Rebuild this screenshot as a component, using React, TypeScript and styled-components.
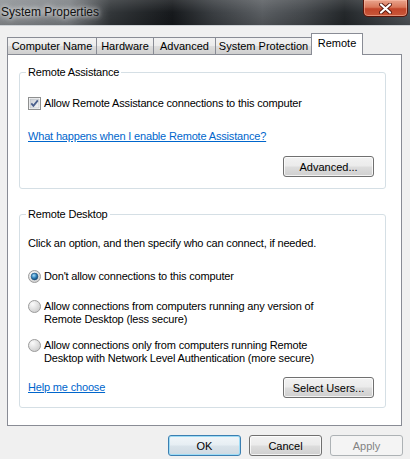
import React from 'react';
import styled, { createGlobalStyle, css } from 'styled-components';

const GlobalStyle = createGlobalStyle`
  html, body {
    margin: 0;
    padding: 0;
    background: #f0f0f0;
  }
  body {
    font-family: "Liberation Sans", Arial, sans-serif;
    font-size: 11px;
    letter-spacing: -0.17px;
    color: #000;
  }
`;

const Window = styled.div`
    width: 410px;
    height: 459px;
    display: flex;
    flex-direction: column;
    background: #f0f0f0;
    overflow: hidden;
`;

const TitleBar = styled.div`
    flex: none;
    height: 25px;
    display: flex;
    align-items: flex-start;
    justify-content: space-between;
    border-bottom: 1px solid #cfd3d7;
    background:
        linear-gradient(180deg, rgba(255, 255, 255, 0.12) 0%, rgba(0, 0, 0, 0) 50%, rgba(0, 0, 0, 0.15) 100%),
        linear-gradient(90deg, #8d9195 0%, #7c8084 17%, #33373a 27%, #16191c 42%, #3a3e42 52%, #5a5e62 64%, #44484c 74%, #24282b 84%, #50555a 100%);
`;

const Title = styled.span`
    font-size: 12px;
    letter-spacing: 0;
    line-height: 24px;
    padding-left: 1px;
    color: #101010;
    text-shadow: 0 0 5px #fff, 0 0 8px rgba(255, 255, 255, 0.8);
`;

const CloseButton = styled.div`
    width: 45px;
    height: 17px;
    margin-right: 2px;
    box-sizing: border-box;
    display: flex;
    align-items: center;
    justify-content: center;
    border: 1px solid #5a1409;
    border-top: none;
    border-radius: 0 0 5px 5px;
    background: linear-gradient(180deg, #e9a48d 0%, #d9775a 45%, #c2452a 55%, #c9583a 100%);
    box-shadow: inset 0 0 0 1px rgba(255, 200, 180, 0.5);
`;

const Body = styled.div`
    flex: 1;
    display: flex;
    flex-direction: column;
`;

const TabStrip = styled.div`
    display: flex;
    align-items: flex-end;
    height: 21px;
    margin: 7px 0 0 8px;
    position: relative;
    z-index: 1;
`;

const Tab = styled.div<{ $w: number; $active?: boolean }>`
    width: ${p => p.$w}px;
    height: 17px;
    box-sizing: border-box;
    margin-left: -1px;
    border: 1px solid #898c95;
    border-bottom: none;
    text-align: center;
    line-height: 16px;
    letter-spacing: 0;
    white-space: nowrap;
    background: linear-gradient(180deg, #f2f2f2 0%, #ebebeb 50%, #dddddd 51%, #cfcfcf 100%);
    ${p =>
        p.$active &&
        css`
            height: 22px;
            margin-bottom: -1px;
            line-height: 19px;
            background: #fff;
            position: relative;
        `}
`;

const Panel = styled.div`
    height: 372px;
    box-sizing: border-box;
    margin: 0 8px 0 7px;
    padding: 10px 15px 0 11px;
    border: 1px solid #898c95;
    background: #fff;
`;

const Group = styled.fieldset<{ $gap?: number }>`
    margin: ${p => p.$gap ?? 0}px 0 0;
    padding: 0 11px 0 8px;
    border: 1px solid #d5dfe5;
    border-radius: 3px;
    min-width: 0;
`;

const Legend = styled.legend`
    margin-left: -2px;
    padding: 0 2px;
    line-height: 14px;
`;

const GroupBody = styled.div<{ $pb: number }>`
    display: flex;
    flex-direction: column;
    padding-bottom: ${p => p.$pb}px;
`;

const Row = styled.div<{ $mt: number }>`
    display: flex;
    align-items: flex-start;
    gap: 3px;
    margin-top: ${p => p.$mt}px;
    line-height: 13px;
`;

const SplitRow = styled.div<{ $mt: number }>`
    display: flex;
    align-items: center;
    justify-content: space-between;
    margin-top: ${p => p.$mt}px;
`;

const Link = styled.a`
    color: #0066cc;
    text-decoration: underline;
    line-height: 13px;
    cursor: pointer;
`;

const ButtonRow = styled.div`
    display: flex;
    justify-content: flex-end;
    gap: 8px;
    margin: 9px 7px 0 0;
`;

const Button = styled.button<{ $w?: number; $mt?: number; $primary?: boolean }>`
    width: ${p => p.$w ?? 73}px;
    height: 21px;
    box-sizing: border-box;
    margin-top: ${p => p.$mt ?? 0}px;
    padding: 0;
    font: inherit;
    color: #000;
    border: 1px solid #707070;
    border-radius: 3px;
    background: linear-gradient(180deg, #f2f2f2 0%, #ebebeb 48%, #dddddd 52%, #cfcfcf 100%);
    box-shadow: inset 0 0 0 1px rgba(255, 255, 255, 0.75);
    align-self: flex-end;
    ${p =>
        p.$primary &&
        css`
            border-color: #3c7fb1;
            box-shadow: inset 0 0 0 1px #9edcf6;
            background: linear-gradient(180deg, #f1f6f9 0%, #e6eef3 48%, #d9e3ea 52%, #cfdae2 100%);
        `}
    &:disabled {
        border-color: #adb2b5;
        background: #f4f4f4;
        box-shadow: none;
        color: #838383;
    }
`;

const Box = styled.span`
    flex: none;
    width: 13px;
    height: 13px;
    display: block;
`;

const CheckBox = () => (
    <Box>
        <svg width="13" height="13" viewBox="0 0 13 13">
            <defs>
                <linearGradient id="cbFill" x1="0" y1="0" x2="1" y2="1">
                    <stop offset="0" stopColor="#cbcfd5" />
                    <stop offset="1" stopColor="#f7f7f7" />
                </linearGradient>
            </defs>
            <rect x="0.5" y="0.5" width="12" height="12" fill="#fff" stroke="#8e8f8f" />
            <rect x="2" y="2" width="9" height="9" fill="url(#cbFill)" stroke="#b3b7bd" strokeWidth="0.6" />
            <path d="M3.3 6.4 L5.4 8.8 L9.8 3.4" fill="none" stroke="#4a5f8c" strokeWidth="1.8" />
        </svg>
    </Box>
);

const Radio = ({ checked }: { checked?: boolean }) => (
    <Box>
        <svg width="13" height="13" viewBox="0 0 13 13">
            <defs>
                <radialGradient id="rbOff" cx="0.35" cy="0.3" r="0.8">
                    <stop offset="0" stopColor="#fbfbfb" />
                    <stop offset="1" stopColor="#c9c9c9" />
                </radialGradient>
                <radialGradient id="rbDot" cx="0.4" cy="0.35" r="0.7">
                    <stop offset="0" stopColor="#a8dcf7" />
                    <stop offset="0.55" stopColor="#2d7fb8" />
                    <stop offset="1" stopColor="#0f3f6a" />
                </radialGradient>
            </defs>
            <circle cx="6.5" cy="6.5" r="6" fill="url(#rbOff)" stroke="#9c9c9c" />
            {checked && <circle cx="6.5" cy="6.5" r="3.4" fill="url(#rbDot)" stroke="#1b4e78" strokeWidth="0.6" />}
        </svg>
    </Box>
);

const App: React.FC = () => {
    return (
        <>
            <GlobalStyle />
            <Window>
                <TitleBar>
                    <Title>System Properties</Title>
                    <CloseButton>
                        <svg width="13" height="11" viewBox="0 0 13 11">
                            <path d="M2 1.5 L11 9.5 M11 1.5 L2 9.5" stroke="#5a1a10" strokeWidth="4" strokeLinecap="round" />
                            <path d="M2 1.5 L11 9.5 M11 1.5 L2 9.5" stroke="#fff" strokeWidth="2.2" strokeLinecap="round" />
                        </svg>
                    </CloseButton>
                </TitleBar>
                <Body>
                    <TabStrip>
                        <Tab $w={90}>Computer Name</Tab>
                        <Tab $w={58}>Hardware</Tab>
                        <Tab $w={63}>Advanced</Tab>
                        <Tab $w={97}>System Protection</Tab>
                        <Tab $w={52} $active>Remote</Tab>
                    </TabStrip>
                    <Panel>
                        <Group>
                            <Legend>Remote Assistance</Legend>
                            <GroupBody $pb={11}>
                                <Row $mt={18}>
                                    <CheckBox />
                                    <span>Allow Remote Assistance connections to this computer</span>
                                </Row>
                                <Row $mt={20}>
                                    <Link>What happens when I enable Remote Assistance?</Link>
                                </Row>
                                <Button $w={91} $mt={13}>Advanced...</Button>
                            </GroupBody>
                        </Group>
                        <Group $gap={18}>
                            <Legend>Remote Desktop</Legend>
                            <GroupBody $pb={9}>
                                <Row $mt={16}>Click an option, and then specify who can connect, if needed.</Row>
                                <Row $mt={20}>
                                    <Radio checked />
                                    <span>Don't allow connections to this computer</span>
                                </Row>
                                <Row $mt={17}>
                                    <Radio />
                                    <span>
                                        Allow connections from computers running any version of
                                        <br />
                                        Remote Desktop (less secure)
                                    </span>
                                </Row>
                                <Row $mt={13}>
                                    <Radio />
                                    <span>
                                        Allow connections only from computers running Remote
                                        <br />
                                        Desktop with Network Level Authentication (more secure)
                                    </span>
                                </Row>
                                <SplitRow $mt={12}>
                                    <Link>Help me choose</Link>
                                    <Button $w={91}>Select Users...</Button>
                                </SplitRow>
                            </GroupBody>
                        </Group>
                    </Panel>
                    <ButtonRow>
                        <Button $primary>OK</Button>
                        <Button>Cancel</Button>
                        <Button disabled>Apply</Button>
                    </ButtonRow>
                </Body>
            </Window>
        </>
    );
};

export default App;
